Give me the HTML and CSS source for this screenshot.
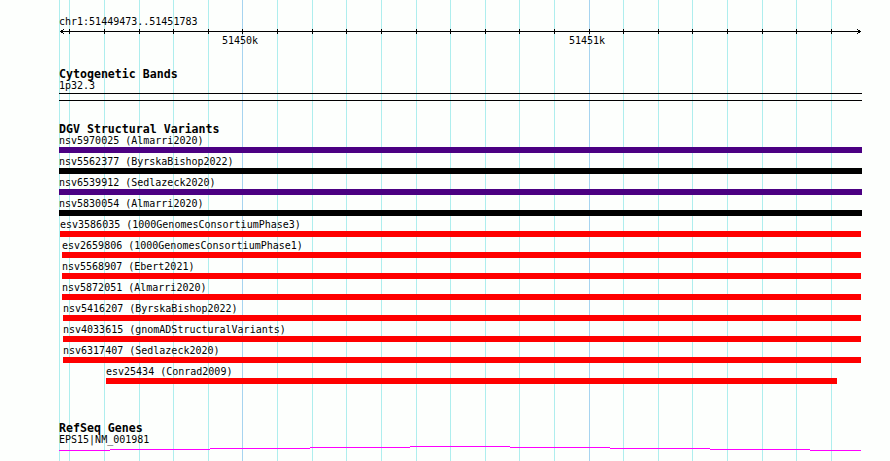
FILE: index.html
```html
<!DOCTYPE html>
<html lang="en">
<head>
<meta charset="utf-8">
<title>Genome browser</title>
<link rel="stylesheet" href="styles.css">
</head>
<body>
<div class="view">
  <div class="grid" aria-hidden="true">
    <i class="gl" style="left:59px"></i>
    <i class="gl" style="left:69px"></i>
    <i class="gl" style="left:104px"></i>
    <i class="gl" style="left:139px"></i>
    <i class="gl" style="left:173px"></i>
    <i class="gl" style="left:208px"></i>
    <i class="gl major" style="left:242px"></i>
    <i class="gl" style="left:277px"></i>
    <i class="gl" style="left:312px"></i>
    <i class="gl" style="left:346px"></i>
    <i class="gl" style="left:381px"></i>
    <i class="gl" style="left:416px"></i>
    <i class="gl" style="left:450px"></i>
    <i class="gl" style="left:485px"></i>
    <i class="gl" style="left:519px"></i>
    <i class="gl" style="left:554px"></i>
    <i class="gl major" style="left:589px"></i>
    <i class="gl" style="left:623px"></i>
    <i class="gl" style="left:658px"></i>
    <i class="gl" style="left:692px"></i>
    <i class="gl" style="left:727px"></i>
    <i class="gl" style="left:762px"></i>
    <i class="gl" style="left:796px"></i>
    <i class="gl" style="left:831px"></i>
  </div>

  <div class="tracks">
    <div class="ruler">
      <div class="ref-label">chr1:51449473..51451783</div>
      <svg class="scale" width="803" height="7" viewBox="0 0 803 7" shape-rendering="crispEdges">
        <rect x="1" y="3" width="801" height="1" fill="#000"/>
        <g fill="#000">
          <rect x="10" y="1" width="1" height="5"/>
          <rect x="45" y="1" width="1" height="5"/>
          <rect x="80" y="1" width="1" height="5"/>
          <rect x="114" y="1" width="1" height="5"/>
          <rect x="149" y="1" width="1" height="5"/>
          <rect x="183" y="1" width="1" height="5"/>
          <rect x="218" y="1" width="1" height="5"/>
          <rect x="253" y="1" width="1" height="5"/>
          <rect x="287" y="1" width="1" height="5"/>
          <rect x="322" y="1" width="1" height="5"/>
          <rect x="357" y="1" width="1" height="5"/>
          <rect x="391" y="1" width="1" height="5"/>
          <rect x="426" y="1" width="1" height="5"/>
          <rect x="460" y="1" width="1" height="5"/>
          <rect x="495" y="1" width="1" height="5"/>
          <rect x="530" y="1" width="1" height="5"/>
          <rect x="564" y="1" width="1" height="5"/>
          <rect x="599" y="1" width="1" height="5"/>
          <rect x="633" y="1" width="1" height="5"/>
          <rect x="668" y="1" width="1" height="5"/>
          <rect x="703" y="1" width="1" height="5"/>
          <rect x="737" y="1" width="1" height="5"/>
          <rect x="772" y="1" width="1" height="5"/>
          <rect x="1" y="3" width="1" height="1"/>
          <rect x="2" y="2" width="1" height="1"/><rect x="2" y="4" width="1" height="1"/>
          <rect x="3" y="2" width="1" height="1"/><rect x="3" y="4" width="1" height="1"/>
          <rect x="4" y="1" width="1" height="1"/><rect x="4" y="5" width="1" height="1"/>
          <rect x="801" y="3" width="1" height="1"/>
          <rect x="800" y="2" width="1" height="1"/><rect x="800" y="4" width="1" height="1"/>
          <rect x="799" y="2" width="1" height="1"/><rect x="799" y="4" width="1" height="1"/>
          <rect x="798" y="1" width="1" height="1"/><rect x="798" y="5" width="1" height="1"/>
        </g>
      </svg>
      <div class="tick-labels">
        <span class="tick-label" style="left:163px">51450k</span>
        <span class="tick-label" style="left:510px">51451k</span>
      </div>
    </div>

    <section class="track cyto">
      <h2 class="track-title">Cytogenetic Bands</h2>
      <div class="label">1p32.3</div>
      <div class="band"></div>
    </section>

    <section class="track dgv">
      <h2 class="track-title">DGV Structural Variants</h2>
      <div class="feature" style="margin-left:0;width:803px"><div class="label">nsv5970025 (Almarri2020)</div><div class="bar purple"></div></div>
      <div class="feature" style="margin-left:0;width:803px"><div class="label">nsv5562377 (ByrskaBishop2022)</div><div class="bar black"></div></div>
      <div class="feature" style="margin-left:0;width:803px"><div class="label">nsv6539912 (Sedlazeck2020)</div><div class="bar purple"></div></div>
      <div class="feature" style="margin-left:0;width:803px"><div class="label">nsv5830054 (Almarri2020)</div><div class="bar black"></div></div>
      <div class="feature" style="margin-left:1px;width:801px"><div class="label">esv3586035 (1000GenomesConsortiumPhase3)</div><div class="bar red"></div></div>
      <div class="feature" style="margin-left:3px;width:799px"><div class="label">esv2659806 (1000GenomesConsortiumPhase1)</div><div class="bar red"></div></div>
      <div class="feature" style="margin-left:3px;width:799px"><div class="label">nsv5568907 (Ebert2021)</div><div class="bar red"></div></div>
      <div class="feature" style="margin-left:3px;width:799px"><div class="label">nsv5872051 (Almarri2020)</div><div class="bar red"></div></div>
      <div class="feature" style="margin-left:4px;width:798px"><div class="label">nsv5416207 (ByrskaBishop2022)</div><div class="bar red"></div></div>
      <div class="feature" style="margin-left:4px;width:798px"><div class="label">nsv4033615 (gnomADStructuralVariants)</div><div class="bar red"></div></div>
      <div class="feature" style="margin-left:4px;width:798px"><div class="label">nsv6317407 (Sedlazeck2020)</div><div class="bar red"></div></div>
      <div class="feature" style="margin-left:47px;width:731px"><div class="label">esv25434 (Conrad2009)</div><div class="bar red"></div></div>
    </section>

    <section class="track genes">
      <h2 class="track-title">RefSeq Genes</h2>
      <div class="label">EPS15|NM_001981</div>
      <svg class="gene" width="803" height="6" viewBox="0 0 803 6" shape-rendering="crispEdges">
        <g fill="#ff00ff">
          <rect x="0" y="5" width="51" height="1"/>
          <rect x="51" y="4" width="100" height="1"/>
          <rect x="151" y="3" width="100" height="1"/>
          <rect x="251" y="2" width="100" height="1"/>
          <rect x="351" y="1" width="100" height="1"/>
          <rect x="451" y="2" width="100" height="1"/>
          <rect x="551" y="3" width="100" height="1"/>
          <rect x="651" y="4" width="100" height="1"/>
          <rect x="751" y="5" width="51" height="1"/>
        </g>
      </svg>
    </section>
  </div>
</div>
</body>
</html>
```
FILE: styles.css
```css
html, body {
  margin: 0;
  padding: 0;
  background: #fdfffd;
}

.view {
  position: relative;
  width: 890px;
  height: 461px;
  overflow: hidden;
  font-family: "DejaVu Sans Mono", "Liberation Mono", monospace;
  font-size: 10px;
  line-height: 12px;
  color: #000;
}

.grid {
  position: absolute;
  inset: 0;
}

.gl {
  position: absolute;
  top: 0;
  bottom: 0;
  width: 1px;
  background: #aeeeee;
}

.gl.major {
  background: #a6d4f0;
}

.tracks {
  position: relative;
  display: flex;
  flex-direction: column;
  width: 803px;
  margin-left: 59px;
  padding-top: 16px;
}

.ruler {
  display: flex;
  flex-direction: column;
}

.ref-label {
  height: 12px;
  white-space: nowrap;
}

.scale {
  display: block;
}

.tick-labels {
  position: relative;
  height: 12px;
}

.tick-label {
  position: absolute;
  top: 0;
  white-space: nowrap;
}

.track {
  display: flex;
  flex-direction: column;
}

.track-title {
  margin: 0;
  font-size: 11.6px;
  font-weight: bold;
  line-height: 12px;
  height: 12px;
  white-space: nowrap;
}

.label {
  height: 12px;
  white-space: nowrap;
}

.cyto {
  margin-top: 21px;
}

.band {
  margin-top: 1px;
  height: 6px;
  border-top: 1px solid #000;
  border-bottom: 1px solid #000;
}

.dgv {
  margin-top: 22px;
}

.feature {
  display: flex;
  flex-direction: column;
  margin-bottom: 3px;
}

.bar {
  height: 6px;
}

.bar.purple { background: #4b0082; }
.bar.black { background: #000; }
.bar.red { background: #ff0000; }

.genes {
  margin-top: 35px;
}

.gene {
  display: block;
  margin-top: -1px;
}
```
